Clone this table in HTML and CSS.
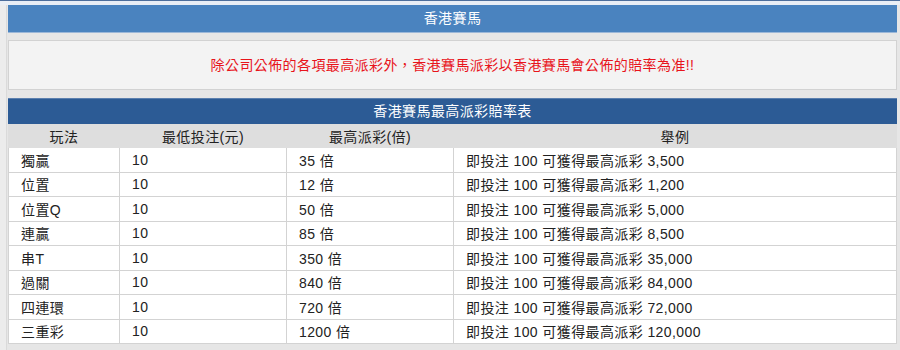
FILE: index.html
```html
<!DOCTYPE html>
<html lang="zh-Hant">
<head>
<meta charset="utf-8">
<link rel="stylesheet" href="styles.css">
</head>
<body>
<div class="topline"></div>
<div class="page">
  <div class="title">香港賽馬</div>
  <div class="notice">除公司公佈的各項最高派彩外，香港賽馬派彩以香港賽馬會公佈的賠率為准!!</div>
  <div class="tablewrap">
    <div class="tabletitle">香港賽馬最高派彩賠率表</div>
    <table class="odds">
      <colgroup>
        <col class="c1"><col class="c2"><col class="c3"><col class="c4">
      </colgroup>
      <thead>
        <tr><th>玩法</th><th>最低投注(元)</th><th>最高派彩(倍)</th><th>舉例</th></tr>
      </thead>
      <tbody>
        <tr><td>獨贏</td><td>10</td><td>35 倍</td><td>即投注 100 可獲得最高派彩 3,500</td></tr>
        <tr><td>位置</td><td>10</td><td>12 倍</td><td>即投注 100 可獲得最高派彩 1,200</td></tr>
        <tr><td>位置Q</td><td>10</td><td>50 倍</td><td>即投注 100 可獲得最高派彩 5,000</td></tr>
        <tr><td>連贏</td><td>10</td><td>85 倍</td><td>即投注 100 可獲得最高派彩 8,500</td></tr>
        <tr><td>串T</td><td>10</td><td>350 倍</td><td>即投注 100 可獲得最高派彩 35,000</td></tr>
        <tr><td>過關</td><td>10</td><td>840 倍</td><td>即投注 100 可獲得最高派彩 84,000</td></tr>
        <tr><td>四連環</td><td>10</td><td>720 倍</td><td>即投注 100 可獲得最高派彩 72,000</td></tr>
        <tr><td>三重彩</td><td>10</td><td>1200 倍</td><td>即投注 100 可獲得最高派彩 120,000</td></tr>
      </tbody>
    </table>
  </div>
</div>
</body>
</html>
```

FILE: styles.css
```css
html, body {
  margin: 0;
  padding: 0;
  background: #e6e6e6;
  font-family: "Liberation Sans", "Noto Sans CJK TC", Arial, sans-serif;
  font-size: 14px;
  letter-spacing: 0.4px;
  color: #222;
}

.topline {
  height: 1px;
  background: #4d6e9c;
  border-bottom: 4px solid #e9eef5;
}

.page {
  padding: 0 3px 8px 2px;
  border-left: 6px solid #ececec;
  box-shadow: inset 1px 0 0 #dadada;
}

.title {
  height: 27px;
  line-height: 27px;
  background: #4a83bf;
  color: #fff;
  text-align: center;
  border-bottom: 1px solid #9bb7d8;
}

.notice {
  margin-top: 7px;
  height: 48px;
  line-height: 48px;
  background: #f3f3f3;
  border: 1px solid #d2d2d2;
  color: #e8141b;
  text-align: center;
}

.tablewrap {
  margin-top: 8px;
}

.tabletitle {
  height: 25px;
  line-height: 25px;
  background: #2c5b95;
  color: #fff;
  text-align: center;
  border-top: 1px solid #5b7fae;
}

.odds {
  width: 100%;
  border-collapse: collapse;
  table-layout: fixed;
}

.odds .c1 { width: 111px; }
.odds .c2 { width: 167px; }
.odds .c3 { width: 167px; }

.odds th {
  background: #dedede;
  font-weight: normal;
  height: 22px;
  text-align: center;
  color: #222;
  padding: 0;
  border: 1px solid #dedede;
}

.odds td {
  background: #fff;
  height: 23.5px;
  padding: 0 0 0 12px;
  border: 1px solid #d3d3d3;
  color: #222;
  white-space: nowrap;
}
```
